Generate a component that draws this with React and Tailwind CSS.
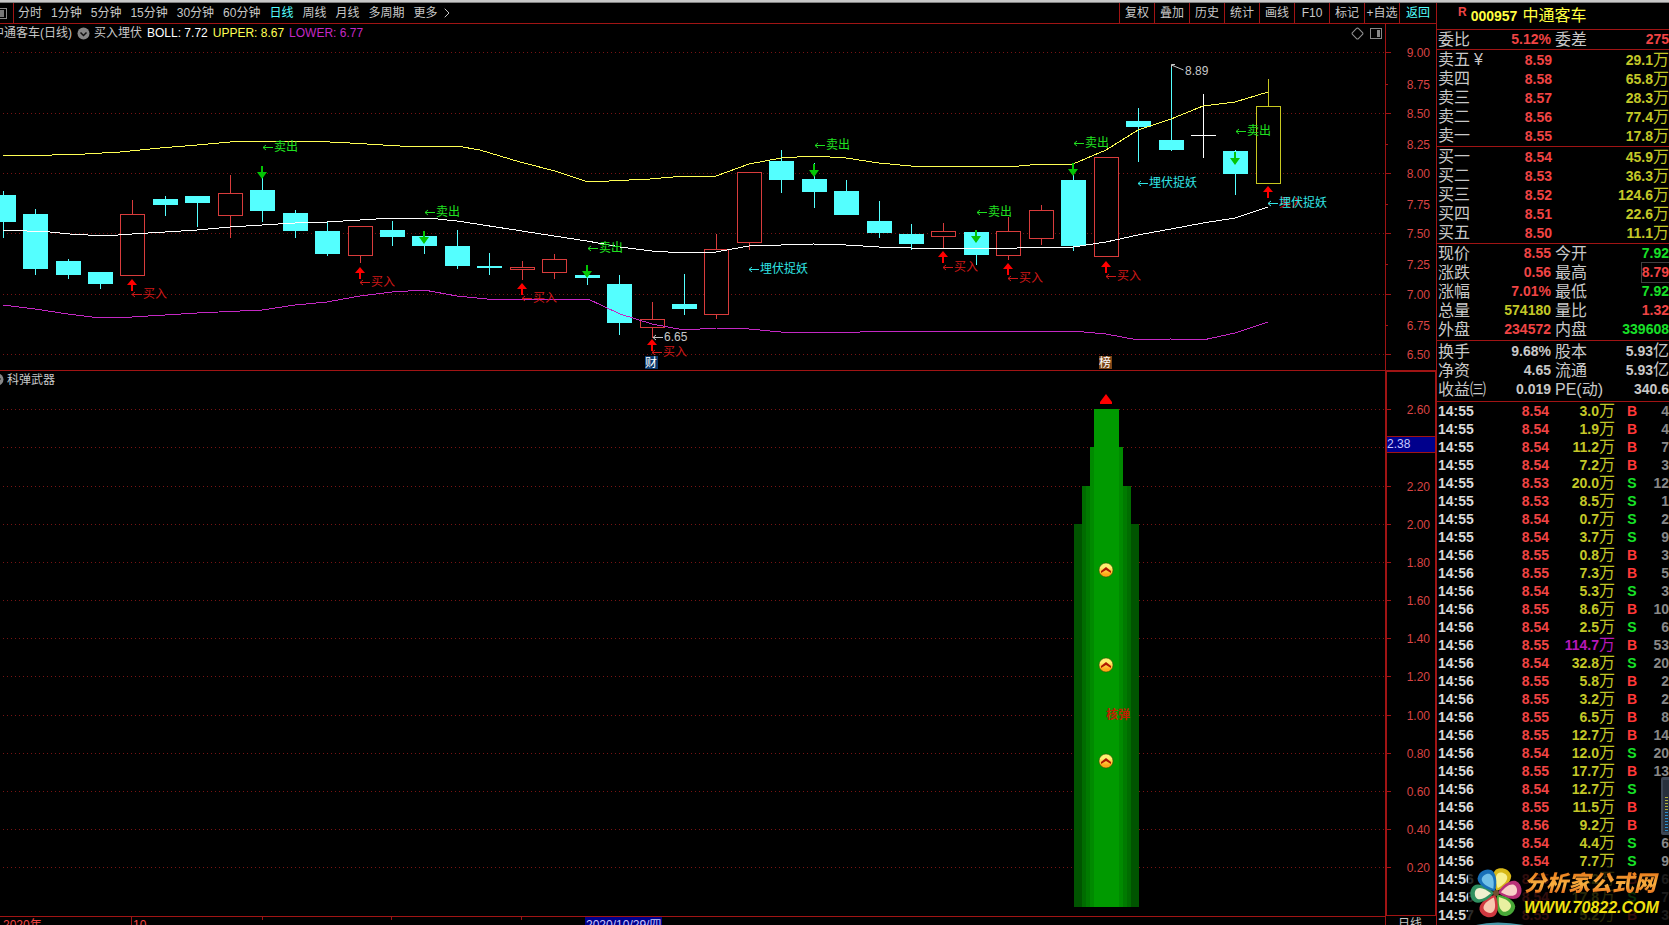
import { Diamond, ChevronRight } from "lucide-react";

const periods = ["分时", "1分钟", "5分钟", "15分钟", "30分钟", "60分钟", "日线", "周线", "月线", "多周期", "更多"];
const tools = ["复权", "叠加", "历史", "统计", "画线", "F10", "标记", "+自选", "返回"];

// [kind, bodyTop, bodyBottom, wickTop, wickBottom]
const candles = [
  ["down", 195, 222, 191, 238],
  ["down", 214, 269, 209, 275],
  ["down", 261, 275, 259, 279],
  ["down", 272, 284, 272, 289],
  ["up", 214, 276, 200, 276],
  ["down", 199, 205, 196, 216],
  ["down", 196, 203, 196, 227],
  ["up", 193, 216, 175, 238],
  ["down", 190, 211, 166, 222],
  ["down", 213, 231, 210, 238],
  ["down", 231, 254, 221, 256],
  ["up", 226, 256, 226, 263],
  ["down", 230, 237, 221, 246],
  ["down", 236, 246, 231, 254],
  ["down", 246, 266, 230, 269],
  ["down", 266, 268, 253, 275],
  ["up", 267, 270, 261, 280],
  ["up", 259, 273, 254, 279],
  ["down", 275, 278, 266, 285],
  ["down", 284, 323, 275, 335],
  ["up", 319, 328, 302, 338],
  ["down", 304, 309, 274, 315],
  ["up", 249, 315, 234, 319],
  ["up", 172, 243, 172, 250],
  ["down", 161, 180, 150, 193],
  ["down", 179, 192, 163, 208],
  ["down", 191, 215, 180, 215],
  ["down", 221, 233, 201, 238],
  ["down", 234, 244, 224, 250],
  ["up", 231, 237, 223, 249],
  ["down", 232, 255, 230, 265],
  ["up", 231, 256, 217, 260],
  ["up", 210, 239, 205, 245],
  ["down", 180, 246, 163, 251],
  ["up", 157, 257, 157, 257],
  ["down", 121, 127, 108, 162],
  ["down", 140, 150, 65, 151],
  ["flat", 135, 136, 94, 158],
  ["down", 151, 174, 150, 195],
  ["last", 106, 184, 79, 184],
];

const candleColors = { down: "#54ffff", up: "#d83c3c", flat: "#ffffff", last: "#c8c820" };
const candleX = (i) => Math.floor(3.2 + i * 32.44);

const upper =
  "3,155 52,155 85,154 120,152 160,148 197,145 230,142 247,141 310,141 350,143 400,146 457,146 480,150 490,153 520,162 555,171 588,182 650,179 684,176 716,176 749,164 781,158 814,156 846,158 879,163 911,166 976,166 1008,167 1041,164 1073,164 1106,150 1138,130 1171,119 1203,106 1235,102 1268,92";
const middle =
  "3,230 50,232 70,234 105,236 132,234 165,232 197,230 230,227 262,225 295,223 327,222 360,220 392,218 428,218 457,221 470,223 522,231 554,236 587,241 620,247 652,251 684,253 716,252 749,246 781,245 814,244 846,245 879,247 911,248 976,248 1001,249 1034,247 1073,247 1106,242 1138,235 1171,229 1203,223 1235,218 1268,207";
const lower =
  "3,305 35,309 68,314 100,318 132,317 165,315 197,313 262,310 295,305 327,302 360,296 392,292 424,290 457,296 487,299 588,299 620,314 652,324 684,330 716,328 749,329 781,332 860,332 870,331 1073,331 1106,334 1138,340 1171,339 1203,340 1235,333 1268,322";

// [candle, arrow top, label centre]
const sells = [[8, 166, 147], [13, 231, 212], [18, 265, 248], [25, 164, 145], [30, 230, 212], [33, 163, 143], [38, 152, 131]];
const buys = [[4, 279, 294], [11, 267, 282], [16, 283, 298], [20, 339, 352], [29, 251, 267], [31, 263, 278], [34, 261, 276], [39, 186, 203]];
const ambushes = [[23, 269], [35, 183], [39, 203]];

const priceAxis = [
  ["9.00", 52], ["8.75", 84], ["8.50", 113], ["8.25", 144], ["8.00", 173], ["7.75", 204],
  ["7.50", 233], ["7.25", 264], ["7.00", 294], ["6.75", 325], ["6.50", 354],
];

const weaponAxis = [
  ["2.60", 409], ["", 447], ["2.20", 486], ["2.00", 524], ["1.80", 562], ["1.60", 600], ["1.40", 638],
  ["1.20", 676], ["1.00", 715], ["0.80", 753], ["0.60", 791], ["0.40", 829], ["0.20", 867],
];

// [x, width, top, colour], painted from the outside in
const tower = [
  [1074, 65, 524, "#005400"],
  [1082, 49, 486, "#006c00"],
  [1086, 41, 486, "#007a00"],
  [1090, 33, 447, "#008a00"],
  [1094, 25, 409, "#009a00"],
];

const asks = [["卖五", "8.59", "29.1"], ["卖四", "8.58", "65.8"], ["卖三", "8.57", "28.3"], ["卖二", "8.56", "77.4"], ["卖一", "8.55", "17.8"]];
const bids = [["买一", "8.54", "45.9"], ["买二", "8.53", "36.3"], ["买三", "8.52", "124.6"], ["买四", "8.51", "22.6"], ["买五", "8.50", "11.1"]];

const red = "text-[#f04444]";
const green = "text-[#18e028]";
const yellow = "text-[#c4c828]";
const gray = "text-[#c8c8c8]";

const quotes = [
  ["现价", "8.55", red, "今开", "7.92", green],
  ["涨跌", "0.56", red, "最高", "8.79", red],
  ["涨幅", "7.01%", red, "最低", "7.92", green],
  ["总量", "574180", yellow, "量比", "1.32", red],
  ["外盘", "234572", red, "内盘", "339608", green],
];

const finance = [
  ["换手", "9.68%", gray, "股本", "5.93亿", gray],
  ["净资", "4.65", gray, "流通", "5.93亿", gray],
  ["收益㈢", "0.019", gray, "PE(动)", "340.6", gray],
];

const ticks = [
  ["14:55", "8.54", "3.0", "B", "4"],
  ["14:55", "8.54", "1.9", "B", "4"],
  ["14:55", "8.54", "11.2", "B", "7"],
  ["14:55", "8.54", "7.2", "B", "3"],
  ["14:55", "8.53", "20.0", "S", "12"],
  ["14:55", "8.53", "8.5", "S", "1"],
  ["14:55", "8.54", "0.7", "S", "2"],
  ["14:55", "8.54", "3.7", "S", "9"],
  ["14:56", "8.55", "0.8", "B", "3"],
  ["14:56", "8.55", "7.3", "B", "5"],
  ["14:56", "8.54", "5.3", "S", "3"],
  ["14:56", "8.55", "8.6", "B", "10"],
  ["14:56", "8.54", "2.5", "S", "6"],
  ["14:56", "8.55", "114.7", "B", "53"],
  ["14:56", "8.54", "32.8", "S", "20"],
  ["14:56", "8.55", "5.8", "B", "2"],
  ["14:56", "8.55", "3.2", "B", "2"],
  ["14:56", "8.55", "6.5", "B", "8"],
  ["14:56", "8.55", "12.7", "B", "14"],
  ["14:56", "8.54", "12.0", "S", "20"],
  ["14:56", "8.55", "17.7", "B", "13"],
  ["14:56", "8.54", "12.7", "S", ""],
  ["14:56", "8.55", "11.5", "B", ""],
  ["14:56", "8.56", "9.2", "B", ""],
  ["14:56", "8.54", "4.4", "S", "6"],
  ["14:56", "8.54", "7.7", "S", "9"],
  ["14:56", "8.55", "3.2", "B", "6"],
  ["14:56", "8.54", "17.8", "S", "7"],
  ["14:57", "8.55", "5.2", "B", "3"],
];

function Toolbar() {
  return (
    <div className="flex h-[21px] border-b border-[#a01414] text-xs leading-5 text-[#c8c8c8]">
      <div className="flex w-[14px] items-center border-r border-[#a01414]">
        <svg width="7" height="11" shapeRendering="crispEdges">
          <path d="M0 0H7V11H0V10H6V1H0Z" fill="#888" />
          <rect y="2" width="4" height="7" fill="#777" />
        </svg>
      </div>
      <nav className="flex flex-1 gap-[9px] pl-1">
        {periods.map((p) => (
          <button key={p} className={p === "日线" ? "text-[#54ffff]" : "hover:text-white"}>
            {p}
          </button>
        ))}
        <ChevronRight size={16} strokeWidth={1.5} className="-ml-2 self-center" />
      </nav>
      <div className="flex">
        {tools.map((t) => (
          <button
            key={t}
            className={`w-[35px] border-l border-[#a01414] text-center whitespace-nowrap last:w-[37px] ${
              t === "返回" ? "text-[#54ffff]" : "hover:text-white"
            }`}
          >
            {t}
          </button>
        ))}
      </div>
    </div>
  );
}

function RoundMenu() {
  return (
    <svg width="13" height="13" viewBox="0 0 13 13">
      <circle cx="6.5" cy="6.5" r="6" fill="#868686" />
      <path d="M3.5 5.5L6.5 8.5L9.5 5.5" fill="none" stroke="#111" strokeWidth="1.5" />
    </svg>
  );
}

function GridLine({ y }) {
  return <line x1="3" x2="100%" y1={y + 0.5} y2={y + 0.5} stroke="#781414" strokeDasharray="1 3" />;
}

// a small left arrow followed by its text
function Mark({ x, y, color, children }) {
  return (
    <g>
      <path d={`M${x} ${y + 0.5}h10M${x + 3} ${y - 2}l-3 2.5l3 2.5`} fill="none" stroke={color} />
      <text x={x + 11} y={y + 4} fill={color}>
        {children}
      </text>
    </g>
  );
}

function Candle({ index, data }) {
  const [kind, top, bottom, high, low] = data;
  const x = candleX(index);
  const color = candleColors[kind];
  const hollow = kind === "up" || kind === "last";
  return (
    <g fill={color}>
      <rect x={x} y={high} width="1" height={low - high} />
      <rect x={x - 12} y={top} width="25" height={bottom - top} />
      {hollow && <rect x={x - 11} y={top + 1} width="23" height={bottom - top - 2} fill="#000" />}
    </g>
  );
}

function PriceChart() {
  return (
    <div className="relative min-w-0 flex-1">
      <svg className="block h-[346px] w-full text-xs">
        <g transform="translate(0 -24)">
          <g shapeRendering="crispEdges">
            {priceAxis.filter((_, i) => i % 2 === 0).map(([label, y]) => <GridLine key={label} y={y} />)}
            {candles.map((c, i) => <Candle key={i} index={i} data={c} />)}
            <polyline points={upper} fill="none" stroke="#ffff54" />
            <polyline points={middle} fill="none" stroke="#fff" />
            <polyline points={lower} fill="none" stroke="#c428c4" />
          </g>

          {sells.map(([i, top, y]) => (
            <g key={i}>
              <path d={`M${candleX(i) - 1} ${top}h2v6h4l-5 7l-5 -7h4z`} fill="#04c404" />
              <Mark x={candleX(i) + 1} y={y} color="#20e020">卖出</Mark>
            </g>
          ))}
          {buys.map(([i, top, y]) => (
            <g key={i}>
              <path d={`M${candleX(i) - 1} ${top + 12}h2v-6h4l-5 -6l-5 6h4z`} fill="#ff0000" />
              <Mark x={candleX(i)} y={y} color="#d01818">买入</Mark>
            </g>
          ))}
          {ambushes.map(([i, y]) => (
            <Mark key={i} x={candleX(i)} y={y} color="#30e4e4">埋伏捉妖</Mark>
          ))}
          <Mark x={653} y={337} color="#c8c8c8">6.65</Mark>
          <path d="M1175 64.5h-3.5v3M1171.5 65l12 5" fill="none" stroke="#c8c8c8" />
          <text x="1185" y="75" fill="#c8c8c8">8.89</text>

          <rect x="645" y="356" width="13" height="13" fill="#0a386c" />
          <text x="645" y="367" fill="#fff">财</text>
          <rect x="1099" y="356" width="13" height="13" fill="#7a4416" />
          <text x="1099" y="367" fill="#fff">榜</text>
        </g>
      </svg>

      <div className="absolute inset-x-0 top-0 flex h-[18px] items-center gap-[5px] overflow-hidden text-xs text-[#c8c8c8]">
        <span className="-ml-2">中通客车(日线)</span>
        <RoundMenu />
        <span className="-ml-px">买入埋伏</span>
        <span className="text-white">BOLL: 7.72</span>
        <span className="text-[#ffff54]">UPPER: 8.67</span>
        <span className="text-[#c428c4]">LOWER: 6.77</span>
        <Diamond size={13} strokeWidth={2} className="ml-auto text-[#909090]" />
        <svg width="12" height="11" shapeRendering="crispEdges" className="mr-[3px] ml-px">
          <path d="M0 0H12V11H0ZM1 1V10H11V1Z" fill="#888" fillRule="evenodd" />
          <rect x="7" y="2" width="3" height="7" fill="#888" />
        </svg>
      </div>
    </div>
  );
}

function PriceAxis() {
  return (
    <svg className="block h-[346px] w-[51px] text-xs" shapeRendering="crispEdges">
      <rect width="1" height="346" fill="#a01414" />
      <g transform="translate(0 -24)" fill="#d84444">
        {priceAxis.map(([label, y], i) => (
          <g key={label}>
            <rect y={y} width={i % 2 ? 3 : 6} height="1" fill="#a01414" />
            <text x="45" y={y + 5} textAnchor="end">{label}</text>
          </g>
        ))}
      </g>
    </svg>
  );
}

function Coin({ y }) {
  return (
    <g>
      <circle cx="1106" cy={y} r="7" fill="url(#coin)" stroke="#3c3c00" strokeWidth="0.5" />
      <path d={`M1101 ${y + 1}l5 -4l5 4v2l-5 -3l-5 3z`} fill="#b01800" />
    </g>
  );
}

function WeaponChart() {
  return (
    <div className="relative min-w-0 flex-1 border-t border-[#a01414]">
      <svg className="block h-[545px] w-full text-xs">
        <defs>
          <linearGradient id="coin" x1="0" y1="0" x2="0" y2="1">
            <stop offset="0.3" stopColor="#fff070" />
            <stop offset="0.8" stopColor="#ffa818" />
          </linearGradient>
        </defs>
        <g transform="translate(0 -371)">
          <g shapeRendering="crispEdges">
            {weaponAxis.map(([, y]) => <GridLine key={y} y={y} />)}
            {tower.map(([x, width, top, fill]) => (
              <rect key={x} x={x} y={top} width={width} height={907 - top} fill={fill} />
            ))}
          </g>
          <path d="M1106 394l6 8v2h-12v-2z" fill="#ff0000" />
          <Coin y={570} />
          <Coin y={665} />
          <Coin y={761} />
          <text x="1106" y="719" fill="#c02000" fontWeight="bold">核弹</text>
        </g>
      </svg>
      <div className="absolute top-0 left-0 flex h-[17px] items-center gap-[3px] text-xs text-[#c8c8c8]">
        <span className="-ml-[9px]"><RoundMenu /></span>
        <span>科弹武器</span>
      </div>
    </div>
  );
}

function WeaponAxis() {
  return (
    <svg className="block h-[546px] w-[51px] text-xs" shapeRendering="crispEdges">
      <path d="M0 0H51V546H0Z" fill="#a01414" />
      <path d="M2 2H50V545H2Z" fill="#000" />
      <g transform="translate(0 -370)" fill="#d84444">
        {weaponAxis.map(([label, y]) => (
          <g key={y}>
            <rect y={y} width="6" height="1" fill="#a01414" />
            <text x="45" y={y + 5} textAnchor="end">{label}</text>
          </g>
        ))}
        <rect x="2" y="436" width="48" height="17" fill="#a01414" />
        <rect x="2" y="437" width="48" height="15" fill="#00008c" />
        <text x="2" y="448" fill="#c8c8ff">2.38</text>
      </g>
    </svg>
  );
}

function DateBar() {
  return (
    <div className="flex h-[9px] flex-none overflow-hidden text-xs">
      <div className="relative flex-1 border-t border-[#a01414] text-[#f04444]">
        <span className="absolute top-0 left-[3px]">2020年</span>
        <span className="absolute top-0 left-[131px] border-l border-[#a01414] pl-px">10</span>
        <i className="absolute top-0 left-[262px] h-[3px] w-px bg-[#a01414]" />
        <i className="absolute top-0 left-[391px] h-[3px] w-px bg-[#a01414]" />
        <i className="absolute top-0 left-[521px] h-[3px] w-px bg-[#a01414]" />
        <span className="absolute top-0 left-[585px] bg-[#00008c] px-px whitespace-nowrap text-[#c8c8ff]">2020/10/29/四</span>
      </div>
      <div className="w-[51px] border-l border-[#a01414] pl-3 text-[#c8c8c8]">日线</div>
    </div>
  );
}

function BookTable({ rows }) {
  return (
    <div className="border-b border-[#a01414] pb-px pl-px">
      <table className="w-full table-fixed text-sm font-bold">
        <tbody>
          {rows.map(([label, price, volume]) => (
            <tr key={label} className="h-[19px] leading-none">
              <th className="w-[60px] p-0 text-left text-base leading-none font-normal text-[#c8c8c8]">
                {label}
                {label === "卖五" && <span className="ml-1">¥</span>}
              </th>
              <td className="w-[54px] p-0 text-right text-[#f04444]">{price}</td>
              <td className="p-0 text-right text-[#c4c828]">
                {volume}
                <span className="text-base leading-none font-normal">万</span>
              </td>
            </tr>
          ))}
        </tbody>
      </table>
    </div>
  );
}

function Value({ text }) {
  if (!text.endsWith("亿")) return text;
  return (
    <>
      {text.slice(0, -1)}
      <span className="text-base leading-none font-normal">亿</span>
    </>
  );
}

function PairRow({ row }) {
  const [label, value, color, label2, value2, color2] = row;
  return (
    <div className="flex h-[19px] text-sm leading-[19px] font-bold">
      <span className="text-base leading-[19px] font-normal text-[#c8c8c8]">{label}</span>
      <span className="flex flex-1 justify-end">
        <span className={color}>{value}</span>
      </span>
      <div className="flex w-[118px] justify-between pl-1">
        <span className="text-base leading-[19px] font-normal text-[#c8c8c8]">{label2}</span>
        <span className={`${color2} ${label2 === "最高" ? "outline outline-[#404040]" : ""}`}>
          <Value text={value2} />
        </span>
      </div>
    </div>
  );
}

function TickTable() {
  return (
    <table className="w-full table-fixed text-sm font-bold">
      <tbody>
        {ticks.map(([time, price, volume, side, count], i) => (
          <tr key={i} className="h-[18px] leading-none">
            <td className="w-[50px] p-0 text-[#d8d8d8]">{time}</td>
            <td className="w-[61px] p-0 text-right text-[#f04444]">{price}</td>
            <td className={`w-[66px] p-0 text-right ${volume === "114.7" ? "text-[#b818b8]" : "text-[#c4c828]"}`}>
              {volume}
              <span className="text-base leading-none font-normal">万</span>
            </td>
            <td className={`w-[34px] p-0 text-center ${side === "B" ? "text-[#ff3838]" : "text-[#18e028]"}`}>{side}</td>
            <td className="p-0 text-right text-[#888]">{count}</td>
          </tr>
        ))}
      </tbody>
    </table>
  );
}

function ScrollHandle() {
  return (
    <svg className="absolute top-[774px] right-0" width="8" height="58">
      <rect width="10" height="58" rx="2" fill="#3c4654" />
      <rect x="2" y="3" width="6" height="52" fill="#28303c" />
      <path d="M5.5 20v16" stroke="#b0b040" strokeWidth="3" strokeDasharray="1 2" />
      <path d="M5.5 35v20" stroke="#3090d0" strokeWidth="3" strokeDasharray="1 2" />
    </svg>
  );
}

const petals = [
  [20, "#d8b818", "#f8f090"],
  [80, "#b83078", "#f8d0c8"],
  [145, "#48a838", "#e8f0a0"],
  [205, "#d03840", "#f8c8b0"],
  [268, "#309060", "#f0f0d0"],
  [328, "#1870b8", "#70c0e8"],
];

function Watermark() {
  return (
    <div className="absolute right-0 bottom-0 flex h-[58px] w-[201px] items-center bg-black/80">
      <svg width="56" height="58" viewBox="-28 -26 56 58" className="flex-none">
        {petals.map(([angle, outer, inner]) => (
          <g key={angle} transform={`rotate(${angle})`}>
            <path d="M0 -2C-7 -8 -11 -17 -8 -22C-4 -27 4 -27 8 -22C11 -17 7 -8 0 -2Z" fill={outer} />
            <path d="M0 -5C-4 -10 -7 -15 -5 -19C-3 -22 3 -22 5 -19C7 -15 4 -10 0 -5Z" fill={inner} />
          </g>
        ))}
        <circle r="3" fill="#705030" />
        <path d="M-20 32Q0 27 28 32Z" fill="#4898a8" />
      </svg>
      <div className="whitespace-nowrap italic">
        <div className="bg-linear-to-b from-[#e87818] via-[#f8b040] to-[#e06010] bg-clip-text text-[22px] leading-6 font-black text-transparent">
          分析家公式网
        </div>
        <div className="text-base leading-6 font-bold text-[#f0e010]">WWW.70822.COM</div>
      </div>
    </div>
  );
}

function QuotePanel() {
  return (
    <aside className="relative w-[233px] flex-none overflow-hidden border-l border-[#a01414]">
      <div className="flex h-[27px] items-center border-b border-[#a01414] pl-[21px] text-[#ffff40]">
        <span className="mr-1 self-start text-xs leading-[18px] font-bold text-[#f04444]">R</span>
        <span className="mr-[5px] text-sm font-bold">000957</span>
        <h1 className="text-base leading-5">中通客车</h1>
      </div>
      <div className="border-b border-[#a01414] pl-px">
        <PairRow row={["委比", "5.12%", red, "委差", "275", red]} />
      </div>
      <BookTable rows={asks} />
      <BookTable rows={bids} />
      <div className="border-b border-[#a01414] pb-px pl-px">
        {quotes.map((q) => <PairRow key={q[0]} row={q} />)}
      </div>
      <div className="border-b border-[#a01414] pt-px pb-0.5 pl-px">
        {finance.map((q) => <PairRow key={q[0]} row={q} />)}
      </div>
      <div className="pl-px"><TickTable /></div>
      <ScrollHandle />
      <Watermark />
    </aside>
  );
}

export default function App() {
  return (
    <div className="min-h-screen overflow-hidden bg-black font-['Liberation_Sans','Noto_Sans_CJK_SC',sans-serif]">
      <div className="h-[3px] border-b border-[#808080] bg-[#c8c8c8]" />
      <div className="flex">
        <main className="flex min-w-0 flex-1 flex-col">
          <Toolbar />
          <div className="flex">
            <PriceChart />
            <PriceAxis />
          </div>
          <div className="flex">
            <WeaponChart />
            <WeaponAxis />
          </div>
          <DateBar />
        </main>
        <QuotePanel />
      </div>
    </div>
  );
}
